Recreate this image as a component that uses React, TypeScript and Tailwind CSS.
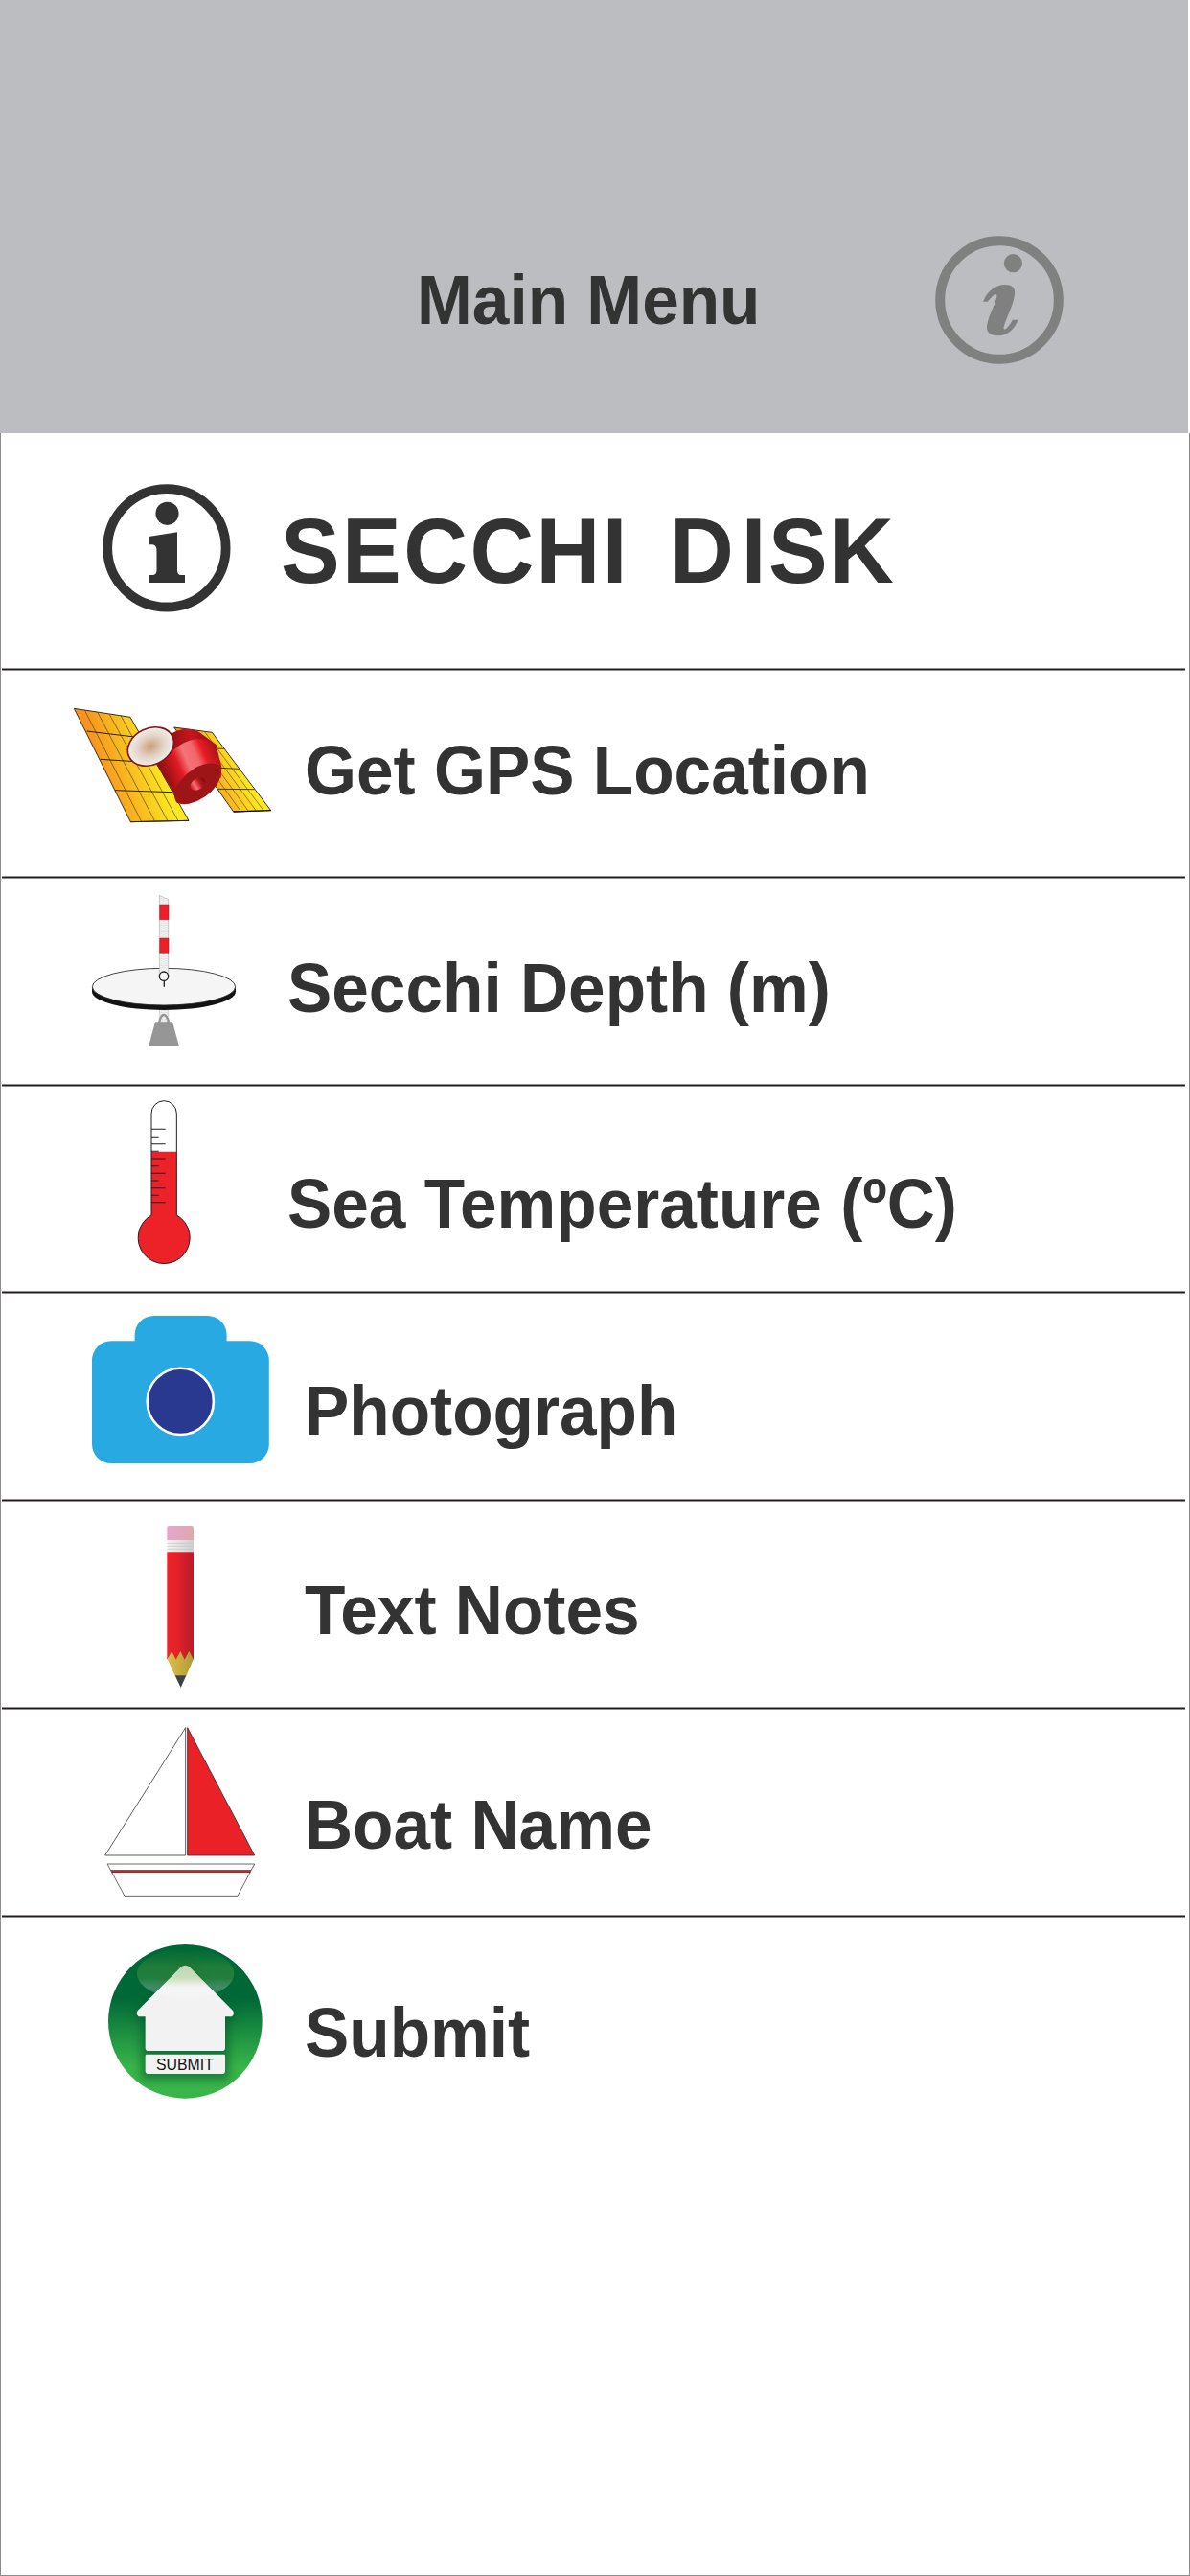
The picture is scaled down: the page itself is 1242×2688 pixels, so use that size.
import React from 'react';

interface MenuItem {
  id: string;
  label: string;
  icon: React.FC;
  iconClass: string;
  labelClass: string;
}

const InfoItalicIcon: React.FC = () => (
  <svg viewBox="0 0 134 134" className="size-[134px]" fill="#808080">
    <circle cx="67" cy="67" r="61.8" fill="none" stroke="#808080" strokeWidth="10" />
    <circle cx="81.4" cy="28.7" r="9.6" />
    <path d="M50 68.7 C54 59 62 51 73 51 C80 51 84 54 83 61 C82 72 74 86 71.6 95 C71 98 73 98.5 75 96 C77.5 93.5 79.5 90.5 80.7 87.7 H86.5 C83 97 76 104.3 65.5 104.3 C57 104.3 53 100 54.2 93 C56 83 62 73 64.3 64 C65 60.5 63 60 60.5 62.5 C58 65 56 67 54.8 68.7 Z" />
  </svg>
);

const InfoIcon: React.FC = () => (
  <svg viewBox="0 0 134 134" className="size-[134px]" fill="#333333">
    <circle cx="66.9" cy="66.8" r="61.7" fill="none" stroke="#333333" strokeWidth="9.8" />
    <circle cx="67.5" cy="30.8" r="12.1" />
    <path d="M48 55 L78 50.3 V90 Q78 95 82 95 H86 V103 H48 V95 H52 Q56.5 95 56.5 90 V70 Q56.5 63.3 52 63.3 H48 Z" />
  </svg>
);

const SatelliteIcon: React.FC = () => (
  <svg viewBox="0 0 720 450" className="h-[150px] w-[240px]">
    <defs>
      <linearGradient id="panelLeft" gradientUnits="userSpaceOnUse" x1="130" y1="260" x2="320" y2="210">
        <stop offset="0" stopColor="#f7931e" />
        <stop offset="1" stopColor="#fbe822" />
      </linearGradient>
      <linearGradient id="panelRight" gradientUnits="userSpaceOnUse" x1="470" y1="330" x2="590" y2="275">
        <stop offset="0" stopColor="#f7931e" />
        <stop offset="1" stopColor="#fbe822" />
      </linearGradient>
      <linearGradient id="cone" gradientUnits="userSpaceOnUse" x1="330" y1="270" x2="510" y2="190">
        <stop offset="0" stopColor="#8a0f12" />
        <stop offset="0.3" stopColor="#e01b22" />
        <stop offset="0.45" stopColor="#f47378" />
        <stop offset="0.62" stopColor="#f2666b" />
        <stop offset="0.74" stopColor="#e81c24" />
        <stop offset="1" stopColor="#9c1216" />
      </linearGradient>
      <linearGradient id="coneBack" gradientUnits="userSpaceOnUse" x1="350" y1="180" x2="490" y2="150">
        <stop offset="0" stopColor="#8a0f12" />
        <stop offset="0.5" stopColor="#c5161c" />
        <stop offset="1" stopColor="#8f1014" />
      </linearGradient>
      <linearGradient id="nozzle" gradientUnits="userSpaceOnUse" x1="415" y1="290" x2="462" y2="290">
        <stop offset="0" stopColor="#d21a20" />
        <stop offset="0.3" stopColor="#f47378" />
        <stop offset="0.65" stopColor="#c5161c" />
        <stop offset="1" stopColor="#7f0d10" />
      </linearGradient>
      <radialGradient id="dish">
        <stop offset="0" stopColor="#c9a078" />
        <stop offset="0.55" stopColor="#e2d3c5" />
        <stop offset="1" stopColor="#f1efee" />
      </radialGradient>
    </defs>
    <path d="M365 117 L484 133 L668 377 L551 381 Z" fill="url(#panelRight)" stroke="#111" strokeWidth="2.5" />
    <path d="M551 381 L668 377" stroke="#111" strokeWidth="4" />
    <path d="M388 120 L574 380 M412 123 L598 379 M437 127 L622 378 M460 130 L645 377" stroke="#4d4412" strokeWidth="1.8" />
    <path d="M412 180 L521 184 M452 241 L569 247 M500 310 L617 311" stroke="#222" strokeWidth="2.6" />
    <path d="M52 58 L228 85 L411 409 L229 413 Z" fill="url(#panelLeft)" stroke="#111" strokeWidth="2.5" />
    <path d="M85 63 L263 412 M125 69 L305 411 M162 75 L345 410 M198 80 L378 410" stroke="#4d4412" strokeWidth="2" />
    <path d="M92 129 L266 150 M134 217 L307 228 M180 314 L360 320 M229 413 L411 409" stroke="#222" strokeWidth="3" />
    <path d="M355 200 L355 138 Q375 123 405 122 Q430 123 447 134 L497 172 Z" fill="url(#coneBack)" />
    <path d="M311 234 Q330 205 362 189 Q395 159 435 154 Q475 150 497 172 Q504 205 514 240 L512 275 L365 325 Z" fill="url(#cone)" />
    <path d="M365 322 Q382 274 432 243 Q482 219 512 238 Q518 262 500 296 Q468 342 412 356 Q388 360 374 353 Q365 342 365 322 Z" fill="#9e1518" />
    <ellipse cx="439" cy="294" rx="26" ry="17" transform="rotate(-35 439 294)" fill="url(#nozzle)" />
    <ellipse cx="292" cy="177" rx="75" ry="57" transform="rotate(-25 292 177)" fill="url(#dish)" stroke="#85151a" strokeWidth="5" />
  </svg>
);

const SecchiDiskIcon: React.FC = () => (
  <svg viewBox="0 0 540 570" className="h-[190px] w-[180px]">
    <defs>
      <pattern id="rope" width="14" height="7" patternUnits="userSpaceOnUse">
        <rect width="14" height="7" fill="#f7f7f7" />
        <path d="M0 2 L7 6 L14 2" fill="none" stroke="#b5b5b5" strokeWidth="1.4" />
      </pattern>
    </defs>
    <path d="M259 395 H287 V440 H259 Z" fill="url(#rope)" stroke="#b5b5b5" strokeWidth="1.5" />
    <path d="M258 442 C262 424 267 417 273 417 C279 417 284 424 289 442" fill="none" stroke="#969696" strokeWidth="7" />
    <path d="M246 439 H300 L321 516 H225 Z" fill="#969696" />
    <path d="M48 329 V344 A225 58 0 0 0 498 344 V329 Z" fill="#131313" />
    <ellipse cx="273" cy="329" rx="224" ry="58" fill="#f5f5f5" stroke="#222" strokeWidth="2.5" />
    <path d="M259 43 L287 56 V296 H259 Z" fill="url(#rope)" stroke="#b0b0b0" strokeWidth="2" />
    <path d="M260 72 H288 V119 H260 Z M260 177 H288 V223 H260 Z" fill="#ed2027" stroke="#7a2a2c" strokeWidth="1.5" />
    <circle cx="273" cy="296" r="14" fill="#f5f5f5" stroke="#222" strokeWidth="4" />
    <path d="M274 311 V329" stroke="#222" strokeWidth="4" />
  </svg>
);

const ThermometerIcon: React.FC = () => (
  <svg viewBox="0 0 300 600" className="h-[200px] w-[100px]">
    <path d="M114 399 V81 A39.5 40 0 0 1 193 81 V399 A81 81 0 1 1 114 399 Z" fill="#fff" />
    <path d="M114 200 H193 V399 A81 81 0 1 1 114 399 Z" fill="#ed2228" />
    <path d="M114 399 V81 A39.5 40 0 0 1 193 81 V399 A81 81 0 1 1 114 399 Z" fill="none" stroke="#231f20" strokeWidth="3" />
    <path
      d="M114 130 H158 M114 154 H137 M114 176 H158 M114 199 H137 M114 222 H158 M114 245 H137 M114 268 H158 M114 291 H137 M114 314 H158 M114 337 H137 M114 359 H158"
      stroke="#231f20"
      strokeWidth="3.2"
    />
  </svg>
);

const CameraIcon: React.FC = () => (
  <svg viewBox="0 0 185 154" className="h-[154px] w-[185px]">
    <rect x="44.6" y="0" width="96" height="70" rx="20" fill="#29a9e2" />
    <rect x="0" y="26.3" width="184.8" height="127.7" rx="20" fill="#29a9e2" />
    <circle cx="92.3" cy="89.4" r="34.6" fill="#2a3990" stroke="#fff" strokeWidth="2.6" />
  </svg>
);

const PencilIcon: React.FC = () => (
  <svg viewBox="0 0 300 630" className="h-[210px] w-[100px]">
    <defs>
      <linearGradient id="pencilBody">
        <stop offset="0" stopColor="#ee2328" />
        <stop offset="0.35" stopColor="#e62228" />
        <stop offset="1" stopColor="#b51d2c" />
      </linearGradient>
      <linearGradient id="eraser">
        <stop offset="0" stopColor="#e8a3cd" />
        <stop offset="1" stopColor="#dda9ae" />
      </linearGradient>
      <linearGradient id="ferrule">
        <stop offset="0" stopColor="#f4f4f4" />
        <stop offset="1" stopColor="#cfcfcf" />
      </linearGradient>
      <linearGradient id="wood">
        <stop offset="0" stopColor="#dcc04c" />
        <stop offset="1" stopColor="#b09a35" />
      </linearGradient>
    </defs>
    <path d="M103 112 V72 Q103 66 110 66 H179 Q186 66 186 72 V112 Z" fill="url(#eraser)" />
    <rect x="103" y="111" width="83" height="37" fill="url(#ferrule)" />
    <path d="M104 121 H185 M104 130 H185 M104 139 H185" stroke="#c2c2c2" strokeWidth="2" />
    <path d="M104 483 L118 455 H172 L186 483 L163 536 H128 Z" fill="url(#wood)" />
    <path d="M103 148 H186 V485 L172 459 L158 485 L145 459 L131 485 L118 459 L103 485 Z" fill="url(#pencilBody)" />
    <path d="M128 535 H163 L146 573 Z" fill="#414042" />
  </svg>
);

const BoatIcon: React.FC = () => (
  <svg viewBox="0 0 600 570" className="h-[190px] w-[200px]" strokeWidth="2.6">
    <path d="M59 408 L311 8 V408 Z" fill="#fff" stroke="#444" />
    <path d="M317 8 L527 408 H317 Z" fill="#ea2127" stroke="#333" />
    <path d="M66 435 H527 L474 535 H120 Z" fill="#fff" stroke="#555" />
    <path d="M77 455 H516 L514 461 H80 Z" fill="#d31f27" stroke="none" />
    <path d="M77 454.5 H516 M80 461 H514" stroke="#4a1a1d" strokeWidth="2" />
  </svg>
);

const SubmitIcon: React.FC = () => (
  <svg viewBox="0 0 561 600" className="h-[200px] w-[187px]">
    <defs>
      <linearGradient id="submitBg" x1="0" y1="0" x2="0" y2="1">
        <stop offset="0.35" stopColor="#006837" />
        <stop offset="0.8" stopColor="#39b54a" />
      </linearGradient>
      <linearGradient id="gloss" x1="0" y1="0" x2="0" y2="1">
        <stop offset="0" stopColor="#4b9b35" stopOpacity="0" />
        <stop offset="0.35" stopColor="#57a33a" stopOpacity="0.34" />
        <stop offset="0.6" stopColor="#75b34a" stopOpacity="0.3" />
        <stop offset="0.78" stopColor="#ffffff" stopOpacity="0.24" />
        <stop offset="1" stopColor="#ffffff" stopOpacity="0.18" />
      </linearGradient>
      <filter id="houseShadow" x="-30%" y="-30%" width="160%" height="160%">
        <feGaussianBlur stdDeviation="14" />
      </filter>
      <clipPath id="submitClip">
        <circle cx="280" cy="298" r="241" />
      </clipPath>
    </defs>
    <circle cx="280" cy="298" r="241" fill="url(#submitBg)" />
    <g clipPath="url(#submitClip)">
      <path d="M280 115 L445 290 H418 V480 H142 V290 H115 Z" fill="#00532c" opacity="0.55" filter="url(#houseShadow)" />
    </g>
    <path
      d="M267 127 Q280 117 293 127 L429 264 Q436 274 426 283 H405 V380 Q405 390 395 390 H165 Q155 390 155 380 V283 H134 Q124 274 131 264 Z"
      fill="#f2f2f2"
    />
    <path d="M158 401 H401 Q405 401 405 405 V452 Q405 462 395 462 H165 Q155 462 155 452 V405 Q155 401 158 401 Z" fill="#f2f2f2" />
    <ellipse cx="281" cy="148" rx="152" ry="78" fill="url(#gloss)" />
    <text x="189" y="451" fontSize="47.5" fill="#111" className="font-['Liberation_Sans',Arial,sans-serif]">
      SUBMIT
    </text>
  </svg>
);

const menuItems: MenuItem[] = [
  { id: 'gps', label: 'Get GPS Location', icon: SatelliteIcon, iconClass: 'w-[316px] pl-[58px] pt-5', labelClass: 'pt-[71px]' },
  { id: 'depth', label: 'Secchi Depth (m)', icon: SecchiDiskIcon, iconClass: 'w-[298px] pl-[78px] pt-[3px]', labelClass: 'pt-[81.5px]' },
  { id: 'temp', label: 'Sea Temperature (ºC)', icon: ThermometerIcon, iconClass: 'w-[298px] pl-[118px] pt-[1.5px]', labelClass: 'pt-[89px]' },
  { id: 'photo', label: 'Photograph', icon: CameraIcon, iconClass: 'w-[316px] pl-[94px] pt-[23px]', labelClass: 'pt-[88.5px]' },
  { id: 'notes', label: 'Text Notes', icon: PencilIcon, iconClass: 'w-[316px] pl-[138px] pt-[3px]', labelClass: 'pt-[80px]' },
  { id: 'boat', label: 'Boat Name', icon: BoatIcon, iconClass: 'w-[316px] pl-[88px] pt-[16px]', labelClass: 'pt-[87.5px]' },
  { id: 'submit', label: 'Submit', icon: SubmitIcon, iconClass: 'w-[316px] pl-[98px] pt-[9.5px]', labelClass: 'pt-[87.5px]' },
];

const Divider: React.FC = () => (
  <div className="mr-[4px] h-[3px] shrink-0 border-y border-[#918d8e] bg-[#231f20]" />
);

const MenuRow: React.FC<{ item: MenuItem; last: boolean }> = ({ item, last }) => {
  const Icon = item.icon;

  return (
    <li className="flex h-[216.75px] flex-col">
      <button className="flex min-h-0 flex-1 items-start text-left">
        <span className={`block shrink-0 ${item.iconClass}`}>
          <Icon />
        </span>
        <span className={`block ${item.labelClass}`}>
          <span className="block origin-[0_85%] scale-y-[1.045] text-[69.4px] leading-none font-bold whitespace-nowrap">
            {item.label}
          </span>
        </span>
      </button>
      {!last && <Divider />}
    </li>
  );
};

export default function App() {
  return (
    <div className="flex h-[2688px] w-[1242px] flex-col bg-white font-['Liberation_Sans',Arial,sans-serif] text-[#333333]">
      {/* Top bar */}
      <header className="flex h-[452px] w-[1240px] shrink-0 items-start bg-[#bcbdc0]">
        <h1 className="ml-[435px] w-[541px] pt-[280px]">
          <span className="block origin-[0_85%] scale-y-[1.045] text-[69.4px] leading-none font-bold whitespace-nowrap">
            Main Menu
          </span>
        </h1>
        <button className="pt-[246px]">
          <InfoItalicIcon />
        </button>
      </header>

      <main className="flex-1 border-x border-b border-[#8c8c8c] pl-px">
        {/* Section title */}
        <div className="flex h-[248px] flex-col">
          <div className="flex flex-1 items-start">
            <span className="ml-[105px] pt-[53px]">
              <InfoIcon />
            </span>
            <h2 className="ml-[52px] origin-[0_85%] scale-y-[1.045] pt-[76.7px] text-[92.5px] leading-none font-bold tracking-[2.4px] whitespace-pre">
              SECCHI<span className="ml-[14px]"> </span>
              <span className="tracking-[8px]">D</span>ISK
            </h2>
          </div>
          <Divider />
        </div>

        <ul>
          {menuItems.map((item, i) => (
            <MenuRow key={item.id} item={item} last={i === menuItems.length - 1} />
          ))}
        </ul>
      </main>
    </div>
  );
}
